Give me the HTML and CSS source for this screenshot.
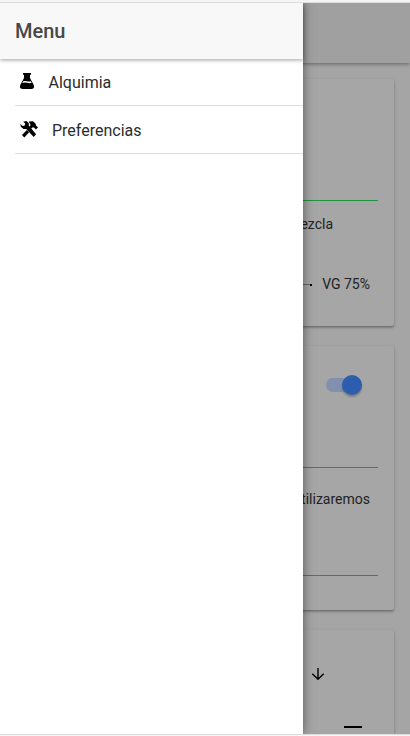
FILE: index.html
```
<!DOCTYPE html>
<html lang="es">
<head>
<meta charset="utf-8">
<title>Alquimia</title>
<link rel="stylesheet" href="styles.css">
</head>
<body>
<div class="app">
  <div class="page">
    <header class="toolbar"></header>
    <main class="content">
      <section class="card card-mix">
        <div class="field field-mix"></div>
        <p class="row label-row"><span class="label-mix">mezcla</span></p>
        <div class="row range-row"><span class="range"></span><span>VG 75%</span></div>
      </section>
      <section class="card card-use">
        <div class="toggle-row"><span class="toggle"><span class="knob"></span></span></div>
        <div class="field field-use"></div>
        <p class="row use-row">utilizaremos</p>
        <div class="field field-last"></div>
      </section>
      <section class="card card-result">
        <svg class="arrow" viewBox="0 0 14 14"><path d="M7 1v11M1.300 6.800L7 12.300l5.700-5.500"/></svg>
        <span class="dash"></span>
      </section>
    </main>
  </div>
  <aside class="menu">
    <header class="menu-head">Menu</header>
    <nav>
      <a class="item"><svg class="flask" viewBox="0 0 14 16"><path fill-rule="evenodd" d="M3 0h8v1.700h-1V5l3.500 6.500Q15.300 16 11.500 16h-9Q-1.300 16 .5 11.500L4 5V1.700H3zM3.200 8.200L2.300 9.900Q4.700 9.100 7 9.800t4.700 0L10.800 8.200Q9 8.800 7 8.300t-3.800-.1z"/></svg>Alquimia</a>
      <a class="item"><svg class="tools" viewBox="0 0 18 17"><path d="M3.200.7L6.400 0l2.400 2.200.1 2.600 7.200 8.500-2.400 2.600-7.500-8-2.700.2L.8 5.700.3 3l2.400 2 2-.4.500-2z"/><path d="M8.700.5L13 .3l2.700 2.500.2 1.700 2.100 1.700-2 2.400-2-2-1.700-.1-1.200 1.300-2-1.900L10.600 4z"/><path d="M6.900 9l2.200 2.300-4.800 5.100L2 14.100z"/></svg><span>Preferencias</span></a>
    </nav>
  </aside>
</div>
</body>
</html>
```
FILE: styles.css
```
* { box-sizing: border-box; }
body { margin: 0; height: 736px; padding-top: 2px; background: #f5f5f5; font-family: Roboto, sans-serif; color: #222; overflow: hidden; }
.app { position: relative; height: 733px; border-top: 1px solid #ddd; border-bottom: 1px solid #ddd; overflow: hidden; background: #a5a5a5; }
.toolbar { height: 60px; background: #a0a0a0; box-shadow: 0 1px 4px rgba(0,0,0,.4); }
.content { padding: 16px 16px 0; }
.card { background: #a6a6a6; border-radius: 2px; margin-bottom: 20px; padding: 0 16px; box-shadow: 0 2px 2px rgba(0,0,0,.16), 0 1px 4px rgba(0,0,0,.12), 0 1px 1px rgba(0,0,0,.12); overflow: hidden; }
.card-mix { height: 247px; }
.card-use { height: 264px; }
.card-result { height: 200px; display: flex; flex-direction: column; align-items: flex-end; }
.field { border-bottom: 1px solid #209440; }
.field-mix { height: 122px; }
.row { margin: 0; padding-right: 8px; font-size: 14px; line-height: 20px; display: flex; justify-content: flex-end; }
.label-row { margin-top: 13px; }
.label-mix { margin-right: 37px; }
.range-row { margin-top: 40px; align-items: center; }
.range { display: flex; align-items: center; justify-content: flex-end; width: 90px; height: 2px; margin: 2px 10px 0 0; background: linear-gradient(#666, #666) 0 0 / 100% 1px no-repeat; }
.range::after { content: ""; width: 2px; height: 2px; background: #000; }
.toggle-row { height: 78px; padding: 32px 16px 0 0; display: flex; justify-content: flex-end; }
.toggle { width: 36px; height: 14px; border-radius: 7px; background: #8190af; display: flex; justify-content: flex-end; align-items: center; }
.knob { width: 20px; height: 20px; flex: none; border-radius: 50%; background: #2d5eae; box-shadow: 0 2px 2px rgba(0,0,0,.25); }
.field-use { height: 44px; }
.use-row { margin-top: 21px; }
.field-last { height: 67px; }
.arrow { width: 14px; height: 14px; margin: 37px 53px 0 0; fill: none; stroke: #000; stroke-width: 1.400; }
.dash { width: 18px; height: 2px; margin: 45px 16px 0 0; background: #000; }
.menu { position: absolute; top: 0; left: 0; width: 303px; height: 731px; background: #fff; box-shadow: 0 0 10px rgba(0,0,0,.5); }
.menu-head { height: 56px; padding-left: 15px; background: #f8f8f8; color: #484848; font-size: 20px; font-weight: 500; line-height: 56px; box-shadow: 0 1px 4px rgba(0,0,0,.38); }
.item { display: flex; align-items: center; height: 48px; margin-left: 15px; padding-top: 2px; border-bottom: 1px solid #dedede; color: #2c2c2c; font-size: 16px; line-height: 20px; }
.item:first-child { height: 47px; }
.flask { width: 14px; height: 16px; margin: -4px 14.500px 0 5px; fill: #000; }
.tools { width: 18px; height: 17px; margin: -3px 14px 0 5px; fill: #000; }
```
